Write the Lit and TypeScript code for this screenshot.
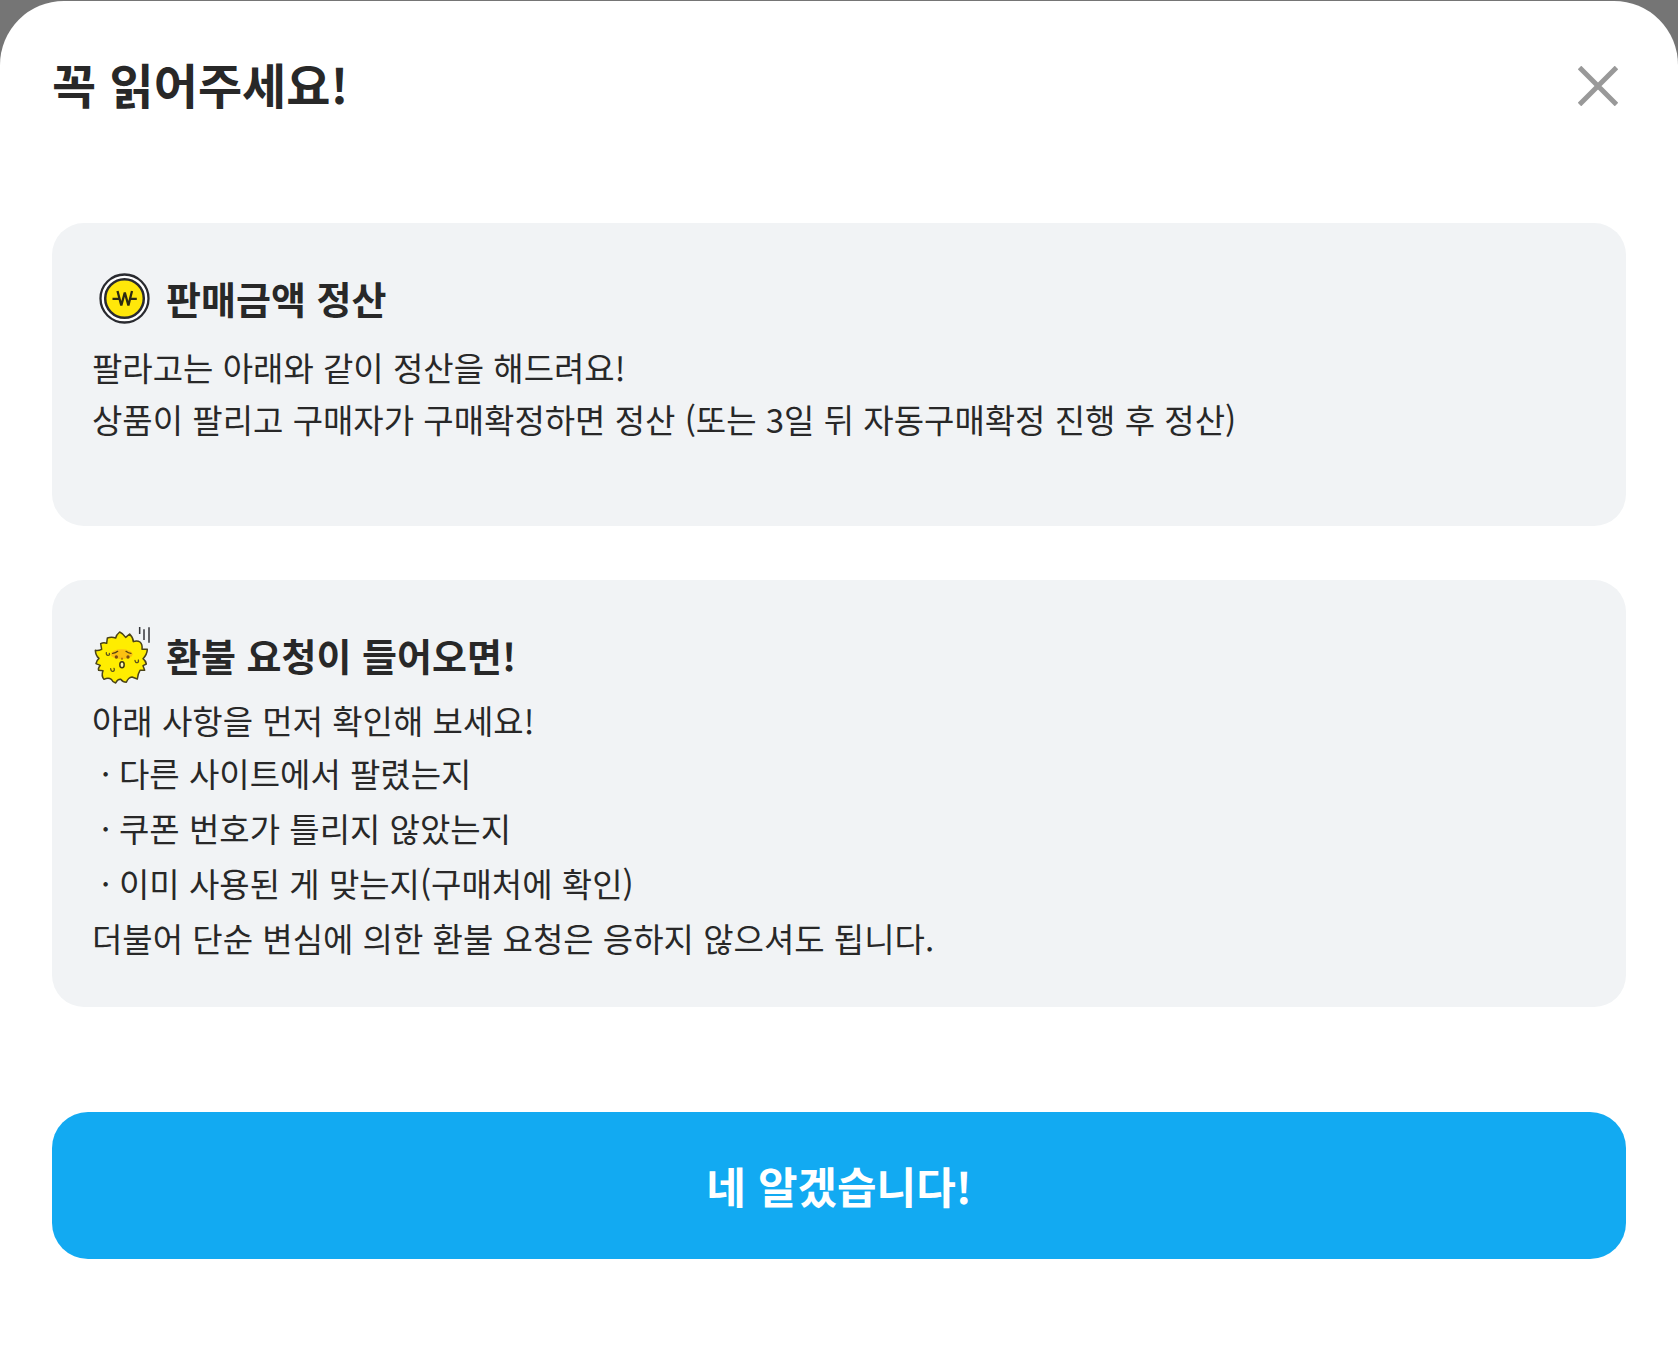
import { LitElement, html, css, svg } from "lit";
import { customElement, state } from "lit/decorators.js";

const coinIcon = html`<svg class="icon" viewBox="0 0 58 64" aria-hidden="true">
  ${svg`
    <circle cx="32.5" cy="31.5" r="24" fill="#fff" stroke="#2a2b30" stroke-width="2.3" />
    <circle cx="32.5" cy="31.5" r="19.3" fill="#ffe70a" stroke="#2a2b30" stroke-width="2.5" />
    <path d="M25.5 24 L29.3 38.5 L32.8 25.5 L36.4 38.5 L40 24" fill="none" stroke="#2c2a12" stroke-width="2.3" stroke-linejoin="bevel" />
    <path d="M20.5 31.8 H27.5 M38.3 31.8 H44.8" fill="none" stroke="#2c2a12" stroke-width="2.2" />
  `}
</svg>`;

const fluffIcon = html`<svg class="icon" viewBox="21 18 174 192" aria-hidden="true">
  ${svg`
    <path d="M67 60 L65 76 Q56 72 47 77 L50 94 Q40 99 31 97 Q32 113 42 121 Q34 128 33 137 L46 142 Q38 151 41 157 L54 158 Q48 173 57 184 Q70 178 79 184 Q82 192 92 195 Q98 183 107 184 Q114 193 124 193 Q130 178 141 177 L157 183 Q159 166 165 157 L179 157 L174 143 L184 138 Q182 128 174 122 Q186 110 187 94 L171 94 Q173 79 165 72 Q156 66 145 71 Q145 60 134 48 L122 58 Q114 46 104 42 Q94 50 92 60 Q80 56 67 60 Z"
      fill="#ffed00" stroke="#4a4318" stroke-width="4.5" stroke-linejoin="round" />
    <ellipse cx="110" cy="109" rx="33" ry="15" fill="#fcc011" />
    <path d="M83 106 Q92 105 98 100 M123 100 Q130 106 138 106" fill="none" stroke="#54420f" stroke-width="4" stroke-linecap="round" />
    <circle cx="94" cy="117" r="5" fill="#7a4a10" />
    <circle cx="129" cy="117" r="5" fill="#7a4a10" />
    <path d="M111 119 V125" stroke="#7a4a10" stroke-width="3.5" />
    <ellipse cx="111" cy="140" rx="6.5" ry="9" fill="#fff8b0" stroke="#3d3613" stroke-width="4.5" />
    <path d="M64 104 Q63 112 69 112 Q75 112 73 106 M77 152 Q78 161 84 160 Q90 158 87 151 M150 127 Q151 135 157 134 Q162 132 160 126" fill="none" stroke="#5c521a" stroke-width="3.8" stroke-linecap="round" />
    <path d="M164 27 V48 M177 34 V66 M192 28 V74" stroke="#34353a" stroke-width="4.5" fill="none" />
  `}
</svg>`;

@customElement("app-root")
export class AppRoot extends LitElement {
  static styles = css`
    :host {
      display: flex;
      flex-direction: column;
      box-sizing: border-box;
      min-height: 100vh;
      padding-top: 1px;
      background: #757575;
      color: #282828;
      font-family: "Noto Sans CJK KR", "Noto Sans", sans-serif;
    }
    .sheet {
      flex: 1;
      display: flex;
      flex-direction: column;
      padding: 57px 52px 104px;
      background: #fff;
      border-radius: 64px 64px 0 0;
    }
    .sheet[hidden] {
      display: none;
    }
    .top {
      display: flex;
      align-items: flex-start;
      justify-content: space-between;
      margin-bottom: 109px;
    }
    h1,
    h2,
    p,
    ul {
      margin: 0;
      padding: 0;
    }
    h1 {
      font-size: 48px;
      line-height: 50px;
      font-weight: 700;
    }
    button {
      border: 0;
      font-family: inherit;
      cursor: pointer;
    }
    .close {
      display: flex;
      padding: 8px;
      background: none;
    }
    .close svg {
      width: 40px;
      height: 40px;
    }
    .cards {
      display: flex;
      flex-direction: column;
      gap: 54px;
    }
    .card {
      padding: 44px 40px 41px;
      background: #f1f3f5;
      border-radius: 32px;
      font-size: 33px;
      line-height: 52px;
    }
    .settlement {
      padding-bottom: 81px;
    }
    .heading {
      display: flex;
      align-items: center;
      gap: 16px;
      margin-bottom: 6px;
    }
    .settlement .heading {
      margin-bottom: 10px;
    }
    .icon {
      flex: none;
      width: 58px;
      height: 64px;
    }
    h2 {
      padding-bottom: 2px;
      font-size: 38px;
      line-height: 56px;
      font-weight: 700;
    }
    ul {
      list-style: none;
    }
    li,
    .closing {
      line-height: 55px;
    }
    li {
      display: flex;
      padding-left: 9px;
    }
    li::before {
      content: "·";
      width: 18px;
    }
    .confirm {
      margin-top: 105px;
      padding: 44px;
      border-radius: 36px;
      background: #12aaf2;
      color: #fff;
      font-size: 43px;
      line-height: 59px;
      font-weight: 700;
    }
  `;

  @state() private dismissed = false;

  private checks = [
    "다른 사이트에서 팔렸는지",
    "쿠폰 번호가 틀리지 않았는지",
    "이미 사용된 게 맞는지(구매처에 확인)",
  ];

  private dismiss() {
    this.dismissed = true;
  }

  render() {
    return html`
      <section class="sheet" lang="ko" role="dialog" aria-labelledby="title" ?hidden=${this.dismissed}>
        <header class="top">
          <h1 id="title">꼭 읽어주세요!</h1>
          <button class="close" type="button" aria-label="닫기" @click=${this.dismiss}>
            <svg viewBox="0 0 40 40" aria-hidden="true">
              <path d="M1.5 1.5 L38.5 38.5 M38.5 1.5 L1.5 38.5" fill="none" stroke="#999" stroke-width="5" />
            </svg>
          </button>
        </header>
        <div class="cards">
          <article class="card settlement">
            <div class="heading">${coinIcon}<h2>판매금액 정산</h2></div>
            <p>팔라고는 아래와 같이 정산을 해드려요!</p>
            <p>상품이 팔리고 구매자가 구매확정하면 정산 (또는 3일 뒤 자동구매확정 진행 후 정산)</p>
          </article>
          <article class="card">
            <div class="heading">${fluffIcon}<h2>환불 요청이 들어오면!</h2></div>
            <p>아래 사항을 먼저 확인해 보세요!</p>
            <ul>
              ${this.checks.map((text) => html`<li>${text}</li>`)}
            </ul>
            <p class="closing">더불어 단순 변심에 의한 환불 요청은 응하지 않으셔도 됩니다.</p>
          </article>
        </div>
        <button class="confirm" type="button" @click=${this.dismiss}>네 알겠습니다!</button>
      </section>
    `;
  }
}
